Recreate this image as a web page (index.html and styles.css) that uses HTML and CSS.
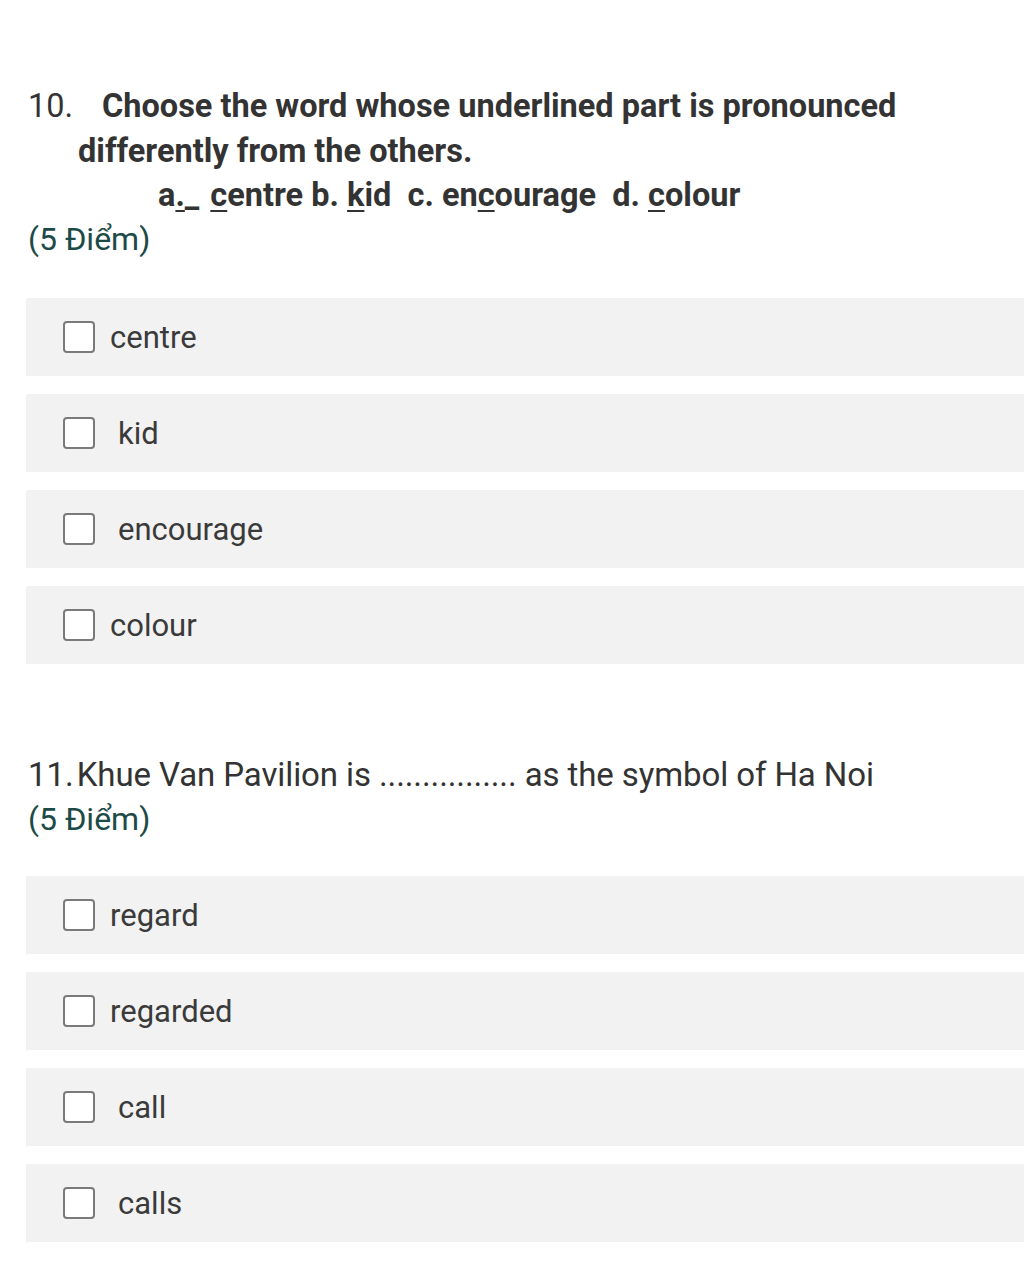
FILE: index.html
```html
<!DOCTYPE html>
<html>
<head>
<meta charset="utf-8">
<link rel="stylesheet" href="styles.css">
</head>
<body>
<div class="page">
  <section class="question q10">
    <div class="q-title bold">
      <div class="q-line"><span class="q-num">10.</span><span>Choose the word whose underlined part is pronounced</span></div>
      <div class="q-line cont">differently from the others.</div>
      <div class="q-line choices">a<u>.</u>_<span class="gap"></span><u>c</u>entre b. <u>k</u>id&nbsp; c. en<u>c</u>ourage&nbsp; d. <u>c</u>olour</div>
    </div>
    <div class="points">(5 Điểm)</div>
    <div class="options">
      <label class="option"><span class="box"></span><span class="opt-text">centre</span></label>
      <label class="option"><span class="box"></span><span class="opt-text lead">kid</span></label>
      <label class="option"><span class="box"></span><span class="opt-text lead">encourage</span></label>
      <label class="option"><span class="box"></span><span class="opt-text">colour</span></label>
    </div>
  </section>
  <section class="question q11">
    <div class="q-title narrow">11.&#8202;Khue Van Pavilion is ................ as the symbol of Ha Noi</div>
    <div class="points">(5 Điểm)</div>
    <div class="options">
      <label class="option"><span class="box"></span><span class="opt-text">regard</span></label>
      <label class="option"><span class="box"></span><span class="opt-text">regarded</span></label>
      <label class="option"><span class="box"></span><span class="opt-text lead">call</span></label>
      <label class="option"><span class="box"></span><span class="opt-text lead">calls</span></label>
    </div>
  </section>
</div>
</body>
</html>
```

FILE: styles.css
```css
html, body {
  margin: 0;
  padding: 0;
  background: #ffffff;
}
body {
  font-family: Roboto, "Noto Sans", sans-serif;
  color: #333333;
}
.page {
  padding: 84px 0 0 26px;
}
.question {
  margin-bottom: 90px;
}
.q-title {
  font-size: 32.5px;
  line-height: 45px;
  padding-left: 2px;
}
.bold {
  font-weight: 700;
}
.q-line {
  display: flex;
}
.q-num {
  font-weight: 400;
  width: 74px;
}
.q-line.cont {
  padding-left: 50px;
}
.q-line.choices {
  padding-left: 130px;
  display: block;
  line-height: 42px;
}
.q-line.choices u {
  text-decoration-thickness: 2px;
  text-underline-offset: 4px;
}
.gap {
  display: inline-block;
  width: 11px;
}
.points {
  font-size: 32px;
  line-height: 46px;
  color: #1c4a47;
  padding-left: 2px;
}
.q11 .q-title.narrow {
  font-weight: 400;
  font-size: 33px;
  letter-spacing: -0.1px;
  line-height: 42px;
}
.options {
  display: flex;
  flex-direction: column;
  gap: 18px;
  margin-top: 36px;
}
.q11 .options {
  margin-top: 34px;
}
.option {
  display: flex;
  align-items: center;
  height: 78px;
  background: #f2f2f2;
  padding-left: 37px;
  font-size: 31px;
}
.box {
  width: 28px;
  height: 28px;
  border: 2px solid #7a7a7a;
  border-radius: 4px;
  background: #ffffff;
  flex: none;
}
.opt-text {
  margin-left: 15px;
  color: #3a3a3a;
}
.opt-text.lead {
  margin-left: 23px;
}
```
